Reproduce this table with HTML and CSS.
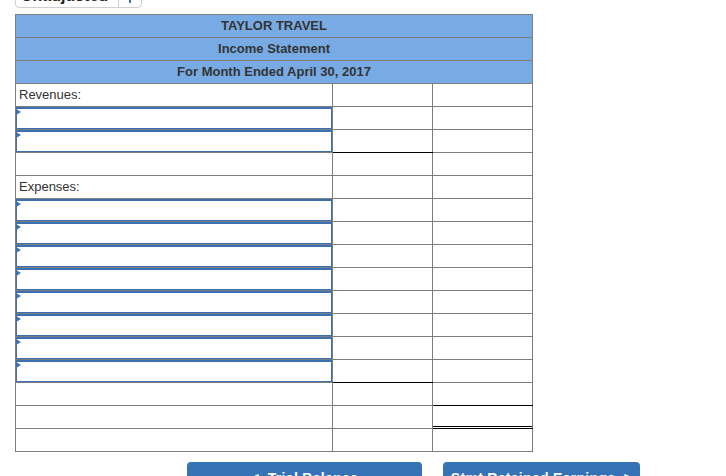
FILE: index.html
```html
<!DOCTYPE html>
<html>
<head>
<meta charset="utf-8">
<link rel="stylesheet" href="styles.css">
</head>
<body>
<div class="page">
  <div class="select">
    <span class="sel-text">Unadjusted</span>
    <span class="sel-arrow"><span class="dot"></span></span>
  </div>
  <table class="stmt">
    <colgroup><col class="c1"><col class="c2"><col class="c3"></colgroup>
    <tr class="hdr"><td colspan="3">TAYLOR TRAVEL</td></tr>
    <tr class="hdr"><td colspan="3">Income Statement</td></tr>
    <tr class="hdr"><td colspan="3">For Month Ended April 30, 2017</td></tr>
    <tr><td class="lbl">Revenues:</td><td></td><td></td></tr>
    <tr><td><div class="inp"><span class="tri"></span></div></td><td></td><td></td></tr>
    <tr><td><div class="inp"><span class="tri"></span></div></td><td class="ul"></td><td></td></tr>
    <tr><td></td><td></td><td></td></tr>
    <tr><td class="lbl">Expenses:</td><td></td><td></td></tr>
    <tr><td><div class="inp"><span class="tri"></span></div></td><td></td><td></td></tr>
    <tr><td><div class="inp"><span class="tri"></span></div></td><td></td><td></td></tr>
    <tr><td><div class="inp"><span class="tri"></span></div></td><td></td><td></td></tr>
    <tr><td><div class="inp"><span class="tri"></span></div></td><td></td><td></td></tr>
    <tr><td><div class="inp"><span class="tri"></span></div></td><td></td><td></td></tr>
    <tr><td><div class="inp"><span class="tri"></span></div></td><td></td><td></td></tr>
    <tr><td><div class="inp"><span class="tri"></span></div></td><td></td><td></td></tr>
    <tr><td><div class="inp"><span class="tri"></span></div></td><td class="ul"></td><td></td></tr>
    <tr><td></td><td></td><td class="ul"></td></tr>
    <tr><td></td><td></td><td class="dbl"></td></tr>
    <tr><td></td><td></td><td></td></tr>
  </table>
  <div class="btns">
    <div class="btn b1">&lt;&nbsp; Trial Balance</div>
    <div class="btn b2">Stmt Retained Earnings &nbsp;&gt;</div>
  </div>
</div>
</body>
</html>
```
FILE: styles.css
```css
html, body {
  margin: 0;
  padding: 0;
  background: #fff;
  font-family: "Liberation Sans", Arial, sans-serif;
  color: #333;
  overflow: hidden;
}
.page {
  padding-left: 15px;
}
.select {
  margin-top: -14px;
  width: 127px;
  height: 22px;
  box-sizing: border-box;
  border: 1px solid #cfcfcf;
  border-radius: 0 0 4px 4px;
  display: flex;
}
.sel-text {
  width: 103px;
  box-sizing: border-box;
  padding-left: 5px;
  font-weight: bold;
  font-size: 16px;
  line-height: 18px;
  color: #222;
  border-right: 1px solid #cfcfcf;
}
.sel-arrow {
  flex: 1;
  display: flex;
  justify-content: center;
}
.dot {
  display: block;
  width: 2px;
  height: 3px;
  margin-top: 13px;
  background: #3a72b5;
}
.stmt {
  margin-top: 6px;
  border-collapse: collapse;
  table-layout: fixed;
  width: 518px;
}
.c1 { width: 317px; }
.c2 { width: 100px; }
.c3 { width: 100px; }
.stmt td {
  border: 1px solid #7d7d7d;
  height: 22px;
  padding: 0;
  font-size: 13px;
  line-height: 15px;
}
.hdr td {
  background: #78abe3;
  text-align: center;
  font-weight: bold;
  color: #333;
  padding-bottom: 2px;
  height: 20px;
}
.stmt td.lbl {
  padding-left: 3px;
  padding-bottom: 2px;
  height: 20px;
  color: #333;
}
.stmt td.ul {
  border-bottom: 1px solid #000;
}
.stmt td.dbl {
  border-bottom: 1px solid #000;
  box-shadow: inset 0 -1px 0 #fff, inset 0 -2px 0 #000;
}
.inp {
  position: relative;
  height: 22px;
  box-sizing: border-box;
  border: 1px solid #3b71b4;
  border-top-width: 2px;
  border-left-color: #5a6f8c;
}
.tri {
  position: absolute;
  left: -1px;
  top: 0;
  width: 0;
  height: 0;
  border-left: 5px solid #3b71b4;
  border-top: 3px solid transparent;
  border-bottom: 3px solid transparent;
}
.btns {
  display: flex;
  gap: 21px;
  margin-left: 172px;
  margin-top: 10px;
}
.btn {
  height: 36px;
  box-sizing: border-box;
  background: #3673b6;
  border-radius: 4px;
  color: #fff;
  font-weight: bold;
  font-size: 14px;
  line-height: 16px;
  padding-top: 8px;
  text-align: center;
  letter-spacing: 0.3px;
}
.b1 { width: 235px; }
.b2 { width: 197px; }
```
